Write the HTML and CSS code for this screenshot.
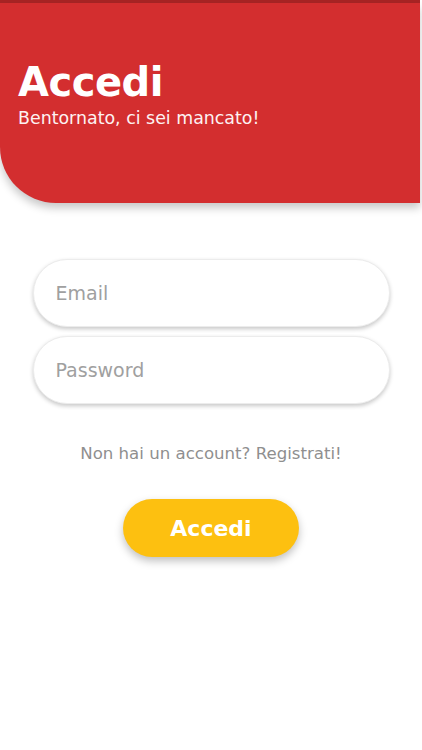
FILE: index.html
```html
<!DOCTYPE html>
<html lang="it">
<head>
<meta charset="utf-8">
<title>Accedi</title>
<link rel="stylesheet" href="styles.css">
</head>
<body>
<div class="topbar"></div>
<header class="hero">
  <h1 class="title">Accedi</h1>
  <p class="subtitle">Bentornato, ci sei mancato!</p>
</header>
<main class="form">
  <div class="fields">
    <input class="field" type="email" placeholder="Email">
    <input class="field" type="password" placeholder="Password">
  </div>
  <p class="register">Non hai un account? Registrati!</p>
  <button class="btn">Accedi</button>
</main>
</body>
</html>
```
FILE: styles.css
```css
* { box-sizing: border-box; }
html, body { margin: 0; padding: 0; background: #fff; }
body {
  width: 422px;
  height: 750px;
  overflow: hidden;
  font-family: "DejaVu Sans", "Open Sans", sans-serif;
}
.topbar {
  height: 3px;
  width: 420px;
  background: #a82424;
}
.hero {
  width: 420px;
  height: 200px;
  background: #d32e2f;
  border-bottom-left-radius: 56px;
  box-shadow: 0 5px 9px rgba(0,0,0,0.22);
  padding: 57px 0 0 18px;
  color: #fff;
}
.title {
  margin: 0;
  font-size: 40px;
  line-height: 44px;
  font-weight: bold;
  letter-spacing: -0.5px;
}
.subtitle {
  margin: 3px 0 0 0;
  font-size: 17.4px;
  line-height: 22px;
  font-weight: normal;
  color: #fdf2f2;
}
.form {
  display: flex;
  flex-direction: column;
  align-items: center;
  padding-top: 56px;
}
.fields {
  display: flex;
  flex-direction: column;
  gap: 9px;
}
.field {
  width: 357px;
  height: 68px;
  border: 1px solid #ececec;
  border-radius: 34px;
  background: #fff;
  box-shadow: 0 2px 4px rgba(0,0,0,0.22);
  padding: 0 0 0 22px;
  font-family: "DejaVu Sans", sans-serif;
  font-size: 19px;
  font-weight: normal;
  outline: none;
}
.field::placeholder { color: #a0a0a0; }
.register {
  margin: 40px 0 0 0;
  font-size: 16.6px;
  line-height: 20px;
  color: #8f8f8f;
  font-weight: normal;
}
.btn {
  margin-top: 35px;
  width: 176px;
  height: 58px;
  border: none;
  border-radius: 29px;
  background: #fdc010;
  color: #fff;
  font-family: "DejaVu Sans", sans-serif;
  font-size: 22px;
  font-weight: bold;
  box-shadow: 0 4px 8px rgba(0,0,0,0.25);
}
```
